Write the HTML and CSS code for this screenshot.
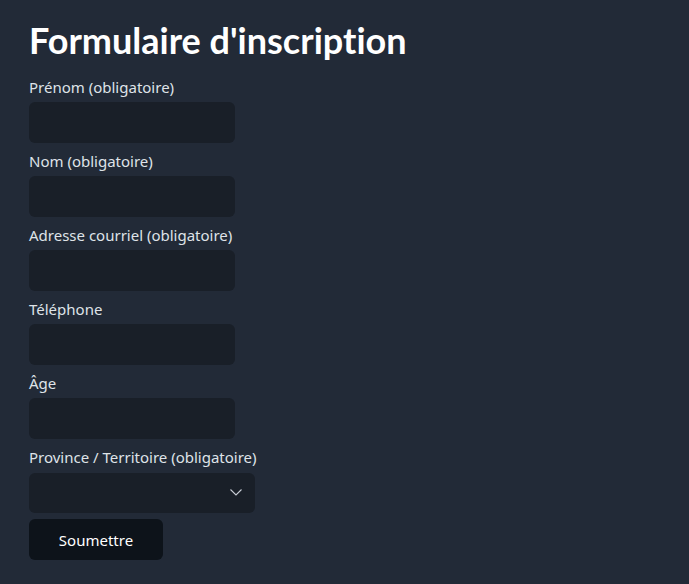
FILE: index.html
```html
<!DOCTYPE html>
<html lang="fr">
<head>
<meta charset="utf-8">
<link rel="stylesheet" href="styles.css">
</head>
<body>
<main class="page">
  <h1 class="title">Formulaire d'inscription</h1>
  <form class="form">
    <label class="label" for="prenom">Prénom (obligatoire)</label>
    <input class="field" id="prenom" type="text">
    <label class="label" for="nom">Nom (obligatoire)</label>
    <input class="field" id="nom" type="text">
    <label class="label" for="courriel">Adresse courriel (obligatoire)</label>
    <input class="field" id="courriel" type="email">
    <label class="label" for="tel">Téléphone</label>
    <input class="field" id="tel" type="tel">
    <label class="label" for="age">Âge</label>
    <input class="field" id="age" type="number">
    <label class="label" for="prov">Province / Territoire (obligatoire)</label>
    <div class="select-wrap">
      <select class="select" id="prov"><option></option></select>
      <svg class="chevron" width="12" height="7" viewBox="0 0 12 7"><path d="M0.5 0.5 L6 6 L11.5 0.5" fill="none" stroke="#c9ced6" stroke-width="1.1"/></svg>
    </div>
    <button class="submit" type="button">Soumettre</button>
  </form>
</main>
</body>
</html>
```
FILE: styles.css
```css
html, body {
  margin: 0;
  padding: 0;
  background: #222a37;
  height: 100%;
}
body {
  font-family: "Noto Sans", "Open Sans", sans-serif;
  color: #e3e6ea;
}
.page {
  padding: 18px 29px 0;
}
.title {
  margin: 0 0 13px;
  font-family: Lato, "Noto Sans", sans-serif;
  font-size: 36px;
  line-height: 44px;
  font-weight: 700;
  font-variant-ligatures: none;
  color: #ffffff;
}
.form {
  display: flex;
  flex-direction: column;
  align-items: flex-start;
}
.label {
  font-size: 15px;
  line-height: 24px;
  margin: 6px 0 3px;
  color: #dfe3e8;
}
.label:first-child {
  margin-top: 0;
}
.field {
  width: 206px;
  height: 41px;
  box-sizing: border-box;
  border: none;
  border-radius: 6px;
  background: #191f28;
  margin: 0;
  padding: 0 12px;
  color: #fff;
}
.select-wrap {
  position: relative;
  width: 226px;
  height: 40px;
  margin-top: 1px;
}
.select {
  appearance: none;
  -webkit-appearance: none;
  width: 226px;
  height: 40px;
  border: none;
  border-radius: 6px;
  background: #191f28;
  color: #fff;
  margin: 0;
}
.chevron {
  position: absolute;
  right: 13px;
  top: 16px;
}
.submit {
  margin-top: 6px;
  width: 134px;
  height: 41px;
  border: none;
  border-radius: 6px;
  background: #0d131a;
  color: #ffffff;
  font-family: "Noto Sans", "Open Sans", sans-serif;
  font-size: 15px;
}
```
